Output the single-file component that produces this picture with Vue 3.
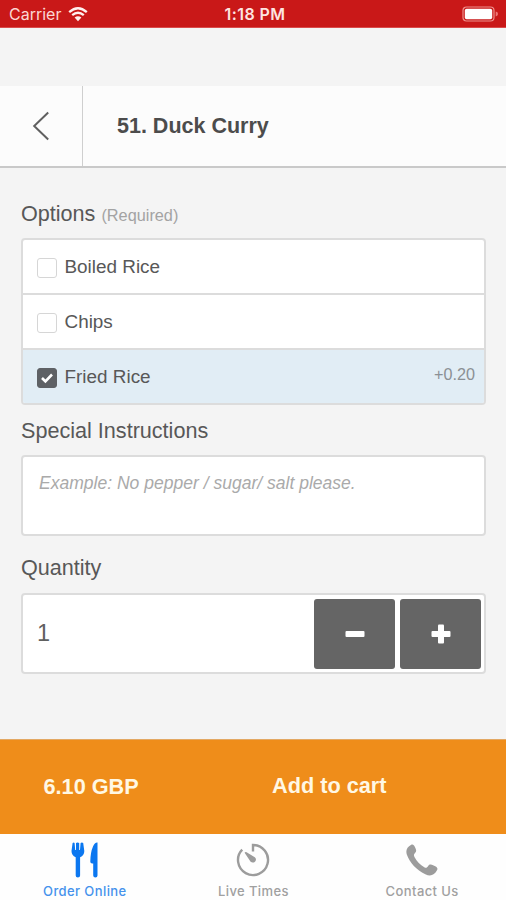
<script setup>
import { ref } from 'vue'

const options = ref([
  { name: 'Boiled Rice', price: '', checked: false },
  { name: 'Chips', price: '', checked: false },
  { name: 'Fried Rice', price: '+0.20', checked: true },
])
const quantity = ref(1)
</script>

<template>
  <div class="screen">
    <div class="status">
      <div class="carrier">
        <span class="carrier-name">Carrier</span>
        <svg class="wifi" width="20" height="15" viewBox="0 0 20 15">
          <path d="M1.2 5.2Q10-2.6 18.8 5.2" />
          <path d="M4.2 8.2Q10 3.2 15.8 8.2" />
          <path class="dot" d="M6.6 10.6Q10 7.8 13.4 10.6L10 14.2Z" />
        </svg>
      </div>
      <span class="clock">1:18 PM</span>
      <svg class="battery" width="37" height="16" viewBox="0 0 37 16">
        <rect class="case" x="1" y="1" width="31" height="14" rx="3.5" />
        <rect class="charge" x="2.8" y="2.8" width="27.4" height="10.4" rx="1.8" />
        <path class="cap" d="M33.7 5.6Q36 6 36 8T33.7 10.4Z" />
      </svg>
    </div>

    <header class="header">
      <button class="back">
        <svg width="18" height="30" viewBox="0 0 18 30"><path d="M16.2 1.5L2.2 15L16.2 28.5" /></svg>
      </button>
      <h1 class="title">51. Duck Curry</h1>
    </header>

    <main class="content">
      <h2 class="label">Options <small>(Required)</small></h2>
      <ul class="options">
        <li v-for="o in options" :key="o.name" class="option" :class="{ selected: o.checked }">
          <span class="box">
            <svg v-if="o.checked" width="14" height="12" viewBox="0 0 14 12"><path d="M2 6L5.4 9.3L12 2.5" /></svg>
          </span>
          <span class="name">{{ o.name }}</span>
          <span v-if="o.price" class="price">{{ o.price }}</span>
        </li>
      </ul>

      <h2 class="label instructions-label">Special Instructions</h2>
      <div class="note">Example: No pepper / sugar/ salt please.</div>

      <h2 class="label quantity-label">Quantity</h2>
      <div class="quantity">
        <span class="count">{{ quantity }}</span>
        <button class="step" @click="quantity--">
          <svg width="20" height="20" viewBox="0 0 20 20"><rect x="0.5" y="7" width="19" height="6" rx="1" /></svg>
        </button>
        <button class="step" @click="quantity++">
          <svg width="20" height="20" viewBox="0 0 20 20">
            <rect x="0.5" y="7" width="19" height="6" rx="1" />
            <rect x="7" y="0.5" width="6" height="19" rx="1" />
          </svg>
        </button>
      </div>
    </main>

    <div class="cart">
      <span class="total">6.10 GBP</span>
      <span class="add">Add to cart</span>
    </div>

    <nav class="tabs">
      <div class="tab active">
        <svg width="28" height="36" viewBox="0 0 28 36">
          <path d="M1.6 1Q2.8 0 3.6 1L4.2 8H5V1Q6.6-.2 8.2 1V8H9L9.6 1Q10.8 0 12.2 1L13.3 9Q13.3 13.5 9.1 15.2V33.5Q9.1 35.5 6.9 35.5T4.7 33.5V15.2Q.5 13.5.5 9Z" />
          <path d="M26.5 1V33.5Q26.5 35.5 24.4 35.5T22.2 33.5V21.5Q19.3 21.5 19.3 19.5Q19.5 10 22 4.5Q23.8.2 26.5.5Z" />
        </svg>
        <span>Order Online</span>
      </div>
      <div class="tab">
        <svg width="34" height="34" viewBox="0 0 34 34">
          <path class="ring" d="M17 8.5V2A15 15 0 1 1 6.2 6.6" />
          <path d="M8.6 9.8Q9.4 8.4 10.6 9.3L18.8 14.2Q20.9 16.2 19.2 18.4Q17 20.6 14.6 18.8Z" />
        </svg>
        <span>Live Times</span>
      </div>
      <div class="tab">
        <svg width="32" height="32" viewBox="0 0 32 32">
          <path d="M5.2.8C6.8-.2 8 1 9 3.2C10.4 6 10.6 7.4 9.2 8.8C7.8 10.2 7.5 11.1 8.6 13.2C10.8 17.2 14.3 20.9 18.3 23.3C20 24.3 21 23.8 22.2 22C23.4 20.3 24.8 20.2 27.6 21.5C31 23.1 32.2 24 31 26.3C28.4 31.2 24.6 32.8 19.3 30.3C10.5 26.2 3.8 18.6.8 10.5C-.5 6.4 1 3.2 5.2.8Z" />
        </svg>
        <span>Contact Us</span>
      </div>
    </nav>
  </div>
</template>

<style>
body { margin: 0; background: #fff; }
</style>

<style scoped>
* { box-sizing: border-box; }
.screen {
  width: 506px;
  height: 900px;
  display: flex;
  flex-direction: column;
  background: #f4f4f4;
  color: #585858;
  font-family: "Liberation Sans", Arial, sans-serif;
}
h1, h2, ul { margin: 0; padding: 0; }
button { border: 0; padding: 0; }
svg { display: block; }

.status {
  height: 28px;
  flex: none;
  display: grid;
  grid-template-columns: 1fr auto 1fr;
  align-items: center;
  padding: 1px 7px 0 9px;
  background: #c91818;
  border-bottom: 1px solid #da4b4b;
  color: #fbd6d3;
  font-family: Inter, sans-serif;
  font-size: 16px;
  line-height: 20px;
}
.carrier { display: flex; align-items: center; gap: 7px; }
.carrier-name { letter-spacing: 0; }
.clock { font-weight: 600; font-size: 16px; letter-spacing: 0.4px; color: #fde4e0; padding-left: 2px; }
.wifi path { fill: none; stroke: #fff0ee; stroke-width: 2.3; }
.wifi .dot { fill: #fff0ee; stroke: none; }
.battery { justify-self: end; }
.battery .case { fill: none; stroke: #ed8f8b; stroke-width: 1.2; }
.battery .charge { fill: #fff; }
.battery .cap { fill: #e77; }

.header {
  height: 82px;
  flex: none;
  margin-top: 58px;
  display: flex;
  background: #fcfcfc;
  border-bottom: 2px solid #c9c9c9;
}
.back {
  width: 83px;
  display: flex;
  align-items: center;
  justify-content: center;
  background: none;
  border-right: 1px solid #cfcfcf;
}
.back path { fill: none; stroke: #606060; stroke-width: 2; }
.title {
  padding: 26px 0 0 34px;
  font-size: 21.5px;
  line-height: 28px;
  color: #4c4c4c;
}

.content { flex: none; height: 571px; padding: 31px 20px 0 21px; }
.label { font-size: 21.6px; font-weight: 400; line-height: 30px; }
.label small { font-size: 16.3px; color: #a3a3a3; }
.options {
  margin-top: 8px;
  list-style: none;
  border: 2px solid #dcdcdc;
  border-radius: 4px;
  background: #fff;
  overflow: hidden;
}
.option {
  height: 55px;
  display: flex;
  align-items: center;
  padding: 1px 9px 0 14px;
  font-size: 18.9px;
  border-bottom: 2px solid #dcdcdc;
}
.option:last-child { height: 53px; border-bottom: 0; }
.option.selected { background: #e1edf5; }
.box {
  width: 20px;
  height: 20px;
  margin: 2px 8px 0 0;
  display: flex;
  align-items: center;
  justify-content: center;
  border: 1.5px solid #d6d6d6;
  border-radius: 3px;
  background: #fff;
}
.selected .box { background: #5e6165; border-color: #5e6165; }
.box path { fill: none; stroke: #fff; stroke-width: 2.6; }
.name { flex: 1; margin-left: -0.5px; }
.price { font-size: 16.2px; color: #8b9094; padding-bottom: 6px; }

.instructions-label { margin-top: 11px; }
.note {
  height: 81px;
  margin-top: 9px;
  padding: 15px 16px;
  border: 2px solid #dcdcdc;
  border-radius: 4px;
  background: #fff;
  color: #aaa;
  font-size: 17.55px;
  font-style: italic;
  line-height: 22px;
}
.quantity-label { margin-top: 17px; }
.quantity {
  height: 81px;
  margin-top: 10px;
  padding: 3px 3px 3px 14px;
  display: flex;
  align-items: center;
  gap: 5px;
  border: 2px solid #dcdcdc;
  border-radius: 4px;
  background: #fff;
}
.count { flex: 1; font-size: 23.5px; color: #606060; }
.step {
  width: 81px;
  height: 70px;
  display: flex;
  align-items: center;
  justify-content: center;
  background: #656565;
  border-radius: 3px;
}
.step rect { fill: #fff; }

.cart {
  height: 95px;
  flex: none;
  display: flex;
  background: #ef8d1a;
  border-top: 1px solid #e3a863;
  color: #fff8e4;
  font-size: 21.7px;
  font-weight: 700;
  line-height: 26px;
}
.total { width: 272px; padding: 34px 0 0 43.5px; }
.add { padding-top: 33px; }

.tabs {
  flex: 1;
  display: grid;
  grid-template-columns: repeat(3, 1fr);
  background: #fefefe;
  color: #a0a0a0;
  font-family: Inter, sans-serif;
  font-size: 13px;
  font-weight: 500;
  letter-spacing: 0.4px;
}
.tab { display: grid; grid-template-rows: 49px 16px; justify-items: center; padding-left: 1px; }
.tab svg { align-self: center; margin-top: 3px; fill: #9c9c9c; }
.tab span { line-height: 16px; }
.tab .ring { fill: none; stroke: #9c9c9c; stroke-width: 2.4; }
.tab.active { color: #4592ec; }
.tab.active svg { fill: #0b77f0; }
</style>
